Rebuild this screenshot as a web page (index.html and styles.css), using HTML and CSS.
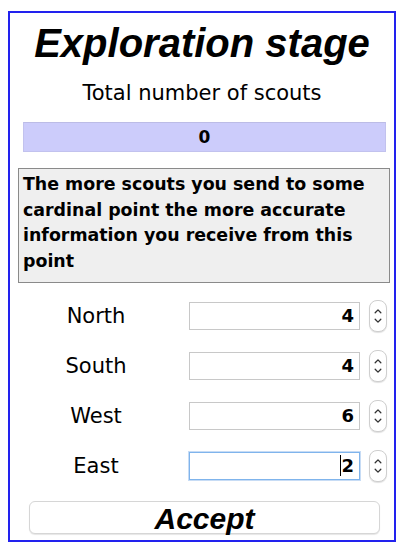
FILE: index.html
```html
<!DOCTYPE html>
<html>
<head>
<meta charset="utf-8">
<link rel="stylesheet" href="styles.css">
</head>
<body>
<div class="panel">
  <h1 class="title">Exploration stage</h1>
  <div class="subtitle">Total number of scouts</div>
  <div class="total">0</div>
  <div class="info">The more scouts you send to some cardinal point the more accurate information you receive from this point</div>
  <div class="rows">
    <div class="row">
      <span class="label">North</span>
      <div class="field">4</div>
      <div class="spin"><svg viewBox="0 0 17 32" width="17" height="32"><path d="M5.5 12.5 L8.5 9.5 L11.5 12.5" /><path d="M5.5 19.5 L8.5 22.5 L11.5 19.5" /></svg></div>
    </div>
    <div class="row">
      <span class="label">South</span>
      <div class="field">4</div>
      <div class="spin"><svg viewBox="0 0 17 32" width="17" height="32"><path d="M5.5 12.5 L8.5 9.5 L11.5 12.5" /><path d="M5.5 19.5 L8.5 22.5 L11.5 19.5" /></svg></div>
    </div>
    <div class="row">
      <span class="label">West</span>
      <div class="field">6</div>
      <div class="spin"><svg viewBox="0 0 17 32" width="17" height="32"><path d="M5.5 12.5 L8.5 9.5 L11.5 12.5" /><path d="M5.5 19.5 L8.5 22.5 L11.5 19.5" /></svg></div>
    </div>
    <div class="row">
      <span class="label">East</span>
      <div class="field focused"><span class="caret"></span>2</div>
      <div class="spin"><svg viewBox="0 0 17 32" width="17" height="32"><path d="M5.5 12.5 L8.5 9.5 L11.5 12.5" /><path d="M5.5 19.5 L8.5 22.5 L11.5 19.5" /></svg></div>
    </div>
  </div>
  <button class="accept">Accept</button>
</div>
</body>
</html>
```
FILE: styles.css
```css
html, body {
  margin: 0;
  padding: 0;
  background: #ffffff;
}
.panel {
  box-sizing: border-box;
  margin: 11px 0 0 8px;
  width: 388px;
  height: 531px;
  border: 2px solid #2222ee;
  padding: 8px 0 0 0;
  display: flex;
  flex-direction: column;
  align-items: stretch;
}
.title {
  margin: 0;
  font-family: "Liberation Sans", Arial, sans-serif;
  font-weight: bold;
  font-style: italic;
  font-size: 40px;
  line-height: 44px;
  text-align: center;
  color: #000;
}
.subtitle {
  margin-top: 16px;
  font-family: "DejaVu Sans", sans-serif;
  font-size: 21px;
  line-height: 24px;
  text-align: center;
  color: #000;
}
.total {
  margin: 17px 8px 0 13px;
  height: 28px;
  background: #ccccfb;
  border: 1px solid #c2c2ee;
  border-top-color: #bcbce6;
  font-family: "DejaVu Sans", sans-serif;
  font-weight: bold;
  font-size: 17px;
  line-height: 28px;
  text-align: center;
  color: #000;
}
.info {
  margin: 16px 4px 0 8px;
  box-sizing: border-box;
  height: 115px;
  background: #efefef;
  border: 1px solid #8a8a8a;
  padding: 3px 4px 0 4px;
  font-family: "DejaVu Sans", sans-serif;
  font-weight: bold;
  font-size: 17.4px;
  line-height: 25.5px;
  color: #000;
}
.rows {
  margin-top: 19px;
  display: flex;
  flex-direction: column;
  gap: 22px;
}
.row {
  display: flex;
  align-items: center;
  height: 28px;
}
.label {
  width: 172px;
  box-sizing: border-box;
  text-align: center;
  font-family: "DejaVu Sans", sans-serif;
  font-size: 21px;
  color: #000;
}
.field {
  box-sizing: border-box;
  margin-left: 7px;
  width: 171px;
  height: 28px;
  border: 1px solid #c8c8c8;
  background: #fff;
  text-align: right;
  padding-right: 5px;
  font-family: "DejaVu Sans", sans-serif;
  font-weight: bold;
  font-size: 18px;
  line-height: 26px;
  color: #000;
}
.field.focused {
  border: 1px solid #7fb4ec;
  box-shadow: 0 0 0 1px #c7dcf5;
}
.caret {
  display: inline-block;
  width: 1.5px;
  height: 21px;
  background: #000;
  vertical-align: -4px;
}
.spin {
  margin-left: 9px;
  box-sizing: border-box;
  width: 18px;
  height: 32px;
  border: 1px solid #cfcfcf;
  border-radius: 8px;
  background: #fff;
  box-shadow: 0 1px 1px rgba(0,0,0,0.12);
  display: flex;
  align-items: center;
  justify-content: center;
}
.spin svg {
  display: block;
  fill: none;
  stroke: #333;
  stroke-width: 1.4;
  stroke-linecap: round;
  stroke-linejoin: round;
}
.accept {
  margin: 21px 14px 0 19px;
  height: 33px;
  border: 1px solid #d6d6d6;
  border-radius: 6px;
  background: #fff;
  box-shadow: 0 1px 1px rgba(0,0,0,0.1);
  font-family: "Liberation Sans", Arial, sans-serif;
  font-weight: bold;
  font-style: italic;
  font-size: 30px;
  line-height: 33px;
  padding: 0;
  color: #000;
}
```
